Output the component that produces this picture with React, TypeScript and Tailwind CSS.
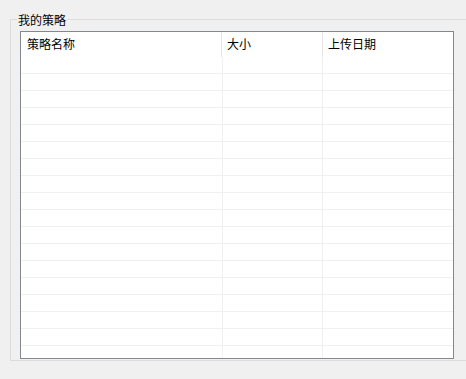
const columns = [
  { title: '策略名称', head: 'w-[201px] pl-[6px]', body: 'w-[202px]' },
  { title: '大小', head: 'w-[101px] pl-[5px]', body: 'w-[100px]' },
  { title: '上传日期', head: 'flex-1 pl-[5px]', body: 'flex-1' },
];

const rows = Array.from({ length: 18 }, (_, i) => i);

export default function App() {
  return (
    <div
      className="w-[466px] h-[379px] overflow-hidden bg-[#f0f0f0] pt-[19px] pl-[10px] text-[12px] text-black"
      style={{ fontFamily: '"Noto Sans CJK SC", "Noto Sans", sans-serif' }}
    >
      {/* group box */}
      <div className="relative w-[480px] h-[342px] border border-[#dcdcdc] pl-[9px] pt-[11px]">
        <span className="absolute left-[6px] top-[-7px] bg-[#f0f0f0] px-px leading-[14px]">我的策略</span>

        {/* list view */}
        <div className="w-[434px] h-[328px] border border-[#828790] bg-white overflow-hidden flex flex-col">
          <div className="flex h-[25px] shrink-0">
            {columns.map((c, i) => (
              <div
                key={c.title}
                className={`${c.head} flex items-center leading-[14px] pb-[2px] ${i < 2 ? 'border-r border-[#e5e5e5]' : ''}`}
              >
                {c.title}
              </div>
            ))}
          </div>
          <div className="flex-1 overflow-hidden">
            {rows.map((r) => (
              <div key={r} className="flex h-[17px] border-b border-[#f0f0f0]">
                {columns.map((c, i) => (
                  <div key={c.title} className={`${c.body} ${i < 2 ? 'border-r border-[#f0f0f0]' : ''}`} />
                ))}
              </div>
            ))}
          </div>
        </div>
      </div>
    </div>
  );
}
